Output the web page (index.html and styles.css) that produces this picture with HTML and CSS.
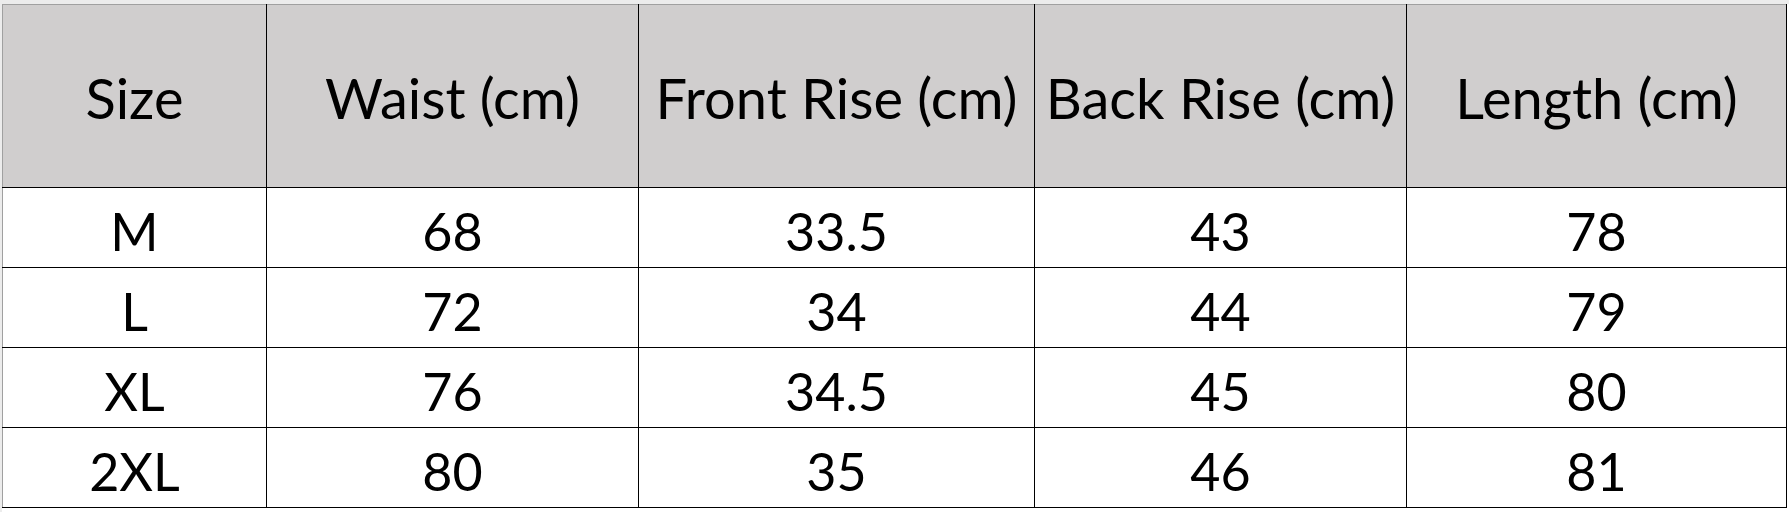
FILE: index.html
```html
<!DOCTYPE html>
<html>
<head>
<meta charset="utf-8">
<link rel="stylesheet" href="styles.css">
</head>
<body>
<div class="sheet">
<table class="size-table">
<colgroup>
<col class="c1"><col class="c2"><col class="c3"><col class="c4"><col class="c5">
</colgroup>
<thead>
<tr><th class="first">Size</th><th>Waist (cm)</th><th>Front Rise (cm)</th><th>Back Rise (cm)</th><th>Length (cm)</th></tr>
</thead>
<tbody>
<tr><td class="first">M</td><td>68</td><td>33.5</td><td>43</td><td>78</td></tr>
<tr><td class="first">L</td><td>72</td><td>34</td><td>44</td><td>79</td></tr>
<tr><td class="first">XL</td><td>76</td><td>34.5</td><td>45</td><td>80</td></tr>
<tr><td class="first">2XL</td><td>80</td><td>35</td><td>46</td><td>81</td></tr>
</tbody>
</table>
</div>
</body>
</html>
```
FILE: styles.css
```css
html, body {
  margin: 0;
  padding: 0;
  background: #ececec;
}
.sheet {
  width: 1787px;
  height: 512px;
  box-sizing: border-box;
  background: #ffffff;
  border-top: 4px solid #ececec;
  margin-left: 2px;
}
.size-table {
  border-collapse: collapse;
  table-layout: fixed;
  width: 1785px;
  font-family: Lato, "Open Sans", sans-serif;
  color: #000;
  background: #ffffff;
}
.c1 { width: 264px; }
.c2 { width: 372px; }
.c3 { width: 396px; }
.c4 { width: 372px; }
.c5 { width: 380px; }
.size-table th,
.size-table td {
  border: 1px solid #000;
  text-align: center;
  white-space: nowrap;
  line-height: 1;
}
.size-table th {
  height: 178px;
  padding: 4px 0 0 0;
  background: #d0cece;
  font-weight: normal;
  font-size: 56px;
  border-top: 1px solid #a0a0a0;
}
.size-table td {
  height: 73px;
  padding: 6px 0 0 0;
  font-size: 52px;
}
.size-table .first {
  border-left: 1px solid #a0a0a0;
}
```
